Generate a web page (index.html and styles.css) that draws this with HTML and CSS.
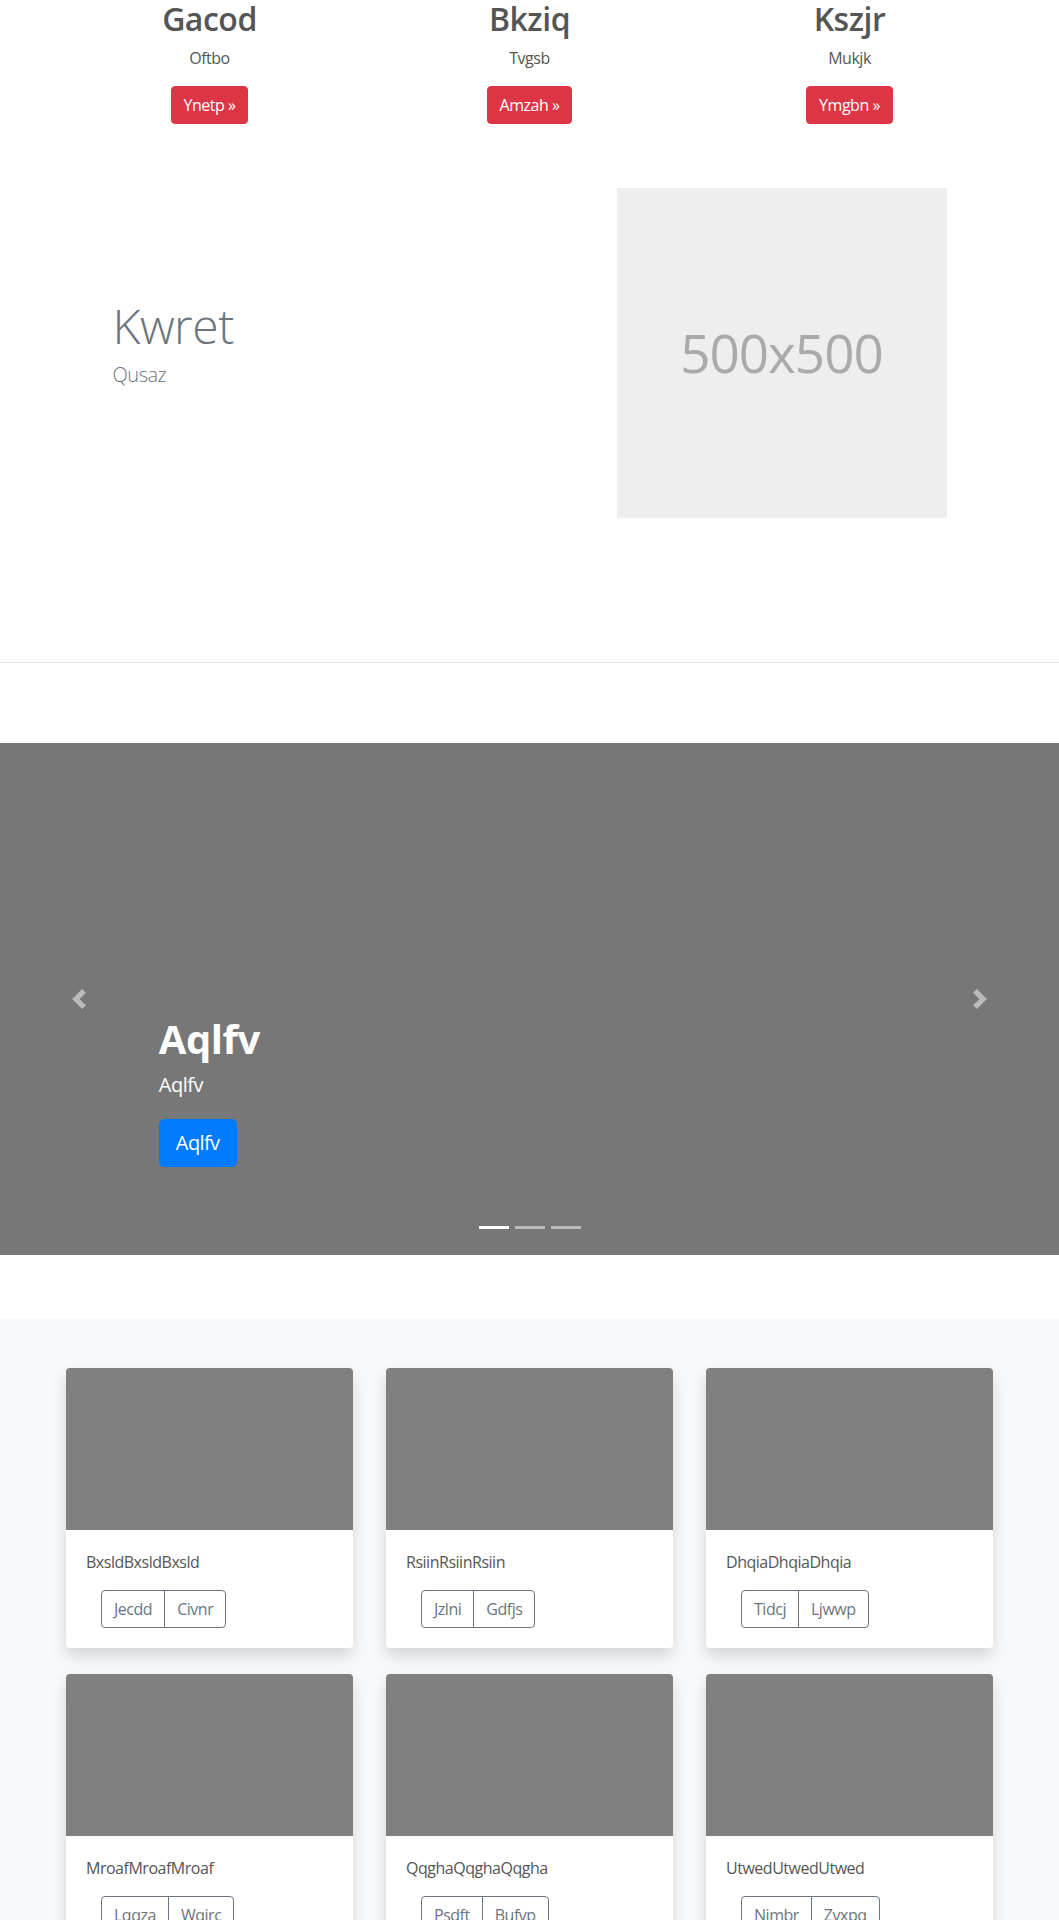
FILE: index.html
```html
<!DOCTYPE html>
<html lang="en">
<head>
<meta charset="utf-8">
<title>Page</title>
<link rel="stylesheet" href="styles.css">
</head>
<body>
<section class="features">
  <div class="features-grid">
    <div class="feature">
      <h2 class="feature-title">Gacod</h2>
      <p class="feature-text">Oftbo</p>
      <a class="btn btn-danger" href="#">Ynetp &raquo;</a>
    </div>
    <div class="feature">
      <h2 class="feature-title">Bkziq</h2>
      <p class="feature-text">Tvgsb</p>
      <a class="btn btn-danger" href="#">Amzah &raquo;</a>
    </div>
    <div class="feature">
      <h2 class="feature-title">Kszjr</h2>
      <p class="feature-text">Mukjk</p>
      <a class="btn btn-danger" href="#">Ymgbn &raquo;</a>
    </div>
  </div>
</section>

<section class="hero">
  <div class="hero-grid">
    <div class="hero-text">
      <h1 class="hero-title">Kwret</h1>
      <p class="hero-lead">Qusaz</p>
    </div>
    <div class="hero-media">
      <div class="placeholder">500x500</div>
    </div>
  </div>
</section>

<hr class="divider">

<section class="carousel">
  <div class="carousel-caption">
    <h1 class="caption-title">Aqlfv</h1>
    <p class="caption-text">Aqlfv</p>
    <a class="btn btn-primary btn-lg" href="#">Aqlfv</a>
  </div>
  <a class="carousel-control control-prev" href="#" aria-label="Previous">
    <svg class="control-icon" viewBox="0 0 8 8" width="20" height="20"><path d="M5.25 0l-4 4 4 4 1.5-1.5L4.25 4l2.5-2.5L5.25 0z"/></svg>
  </a>
  <a class="carousel-control control-next" href="#" aria-label="Next">
    <svg class="control-icon" viewBox="0 0 8 8" width="20" height="20"><path d="M2.75 0l-1.5 1.5L3.75 4l-2.5 2.5L2.75 8l4-4-4-4z"/></svg>
  </a>
  <ol class="carousel-indicators">
    <li class="indicator active"></li>
    <li class="indicator"></li>
    <li class="indicator"></li>
  </ol>
</section>

<section class="album">
  <div class="album-grid">
    <div class="card">
      <div class="card-img"></div>
      <div class="card-body">
        <p class="card-text">BxsldBxsldBxsld</p>
        <div class="btn-group">
          <button class="btn btn-outline">Jecdd</button>
          <button class="btn btn-outline">Civnr</button>
        </div>
      </div>
    </div>
    <div class="card">
      <div class="card-img"></div>
      <div class="card-body">
        <p class="card-text">RsiinRsiinRsiin</p>
        <div class="btn-group">
          <button class="btn btn-outline">Jzlni</button>
          <button class="btn btn-outline">Gdfjs</button>
        </div>
      </div>
    </div>
    <div class="card">
      <div class="card-img"></div>
      <div class="card-body">
        <p class="card-text">DhqiaDhqiaDhqia</p>
        <div class="btn-group">
          <button class="btn btn-outline">Tidcj</button>
          <button class="btn btn-outline">Ljwwp</button>
        </div>
      </div>
    </div>
    <div class="card">
      <div class="card-img"></div>
      <div class="card-body">
        <p class="card-text">MroafMroafMroaf</p>
        <div class="btn-group">
          <button class="btn btn-outline">Lqqza</button>
          <button class="btn btn-outline">Wqirc</button>
        </div>
      </div>
    </div>
    <div class="card">
      <div class="card-img"></div>
      <div class="card-body">
        <p class="card-text">QqghaQqghaQqgha</p>
        <div class="btn-group">
          <button class="btn btn-outline">Psdft</button>
          <button class="btn btn-outline">Bufvp</button>
        </div>
      </div>
    </div>
    <div class="card">
      <div class="card-img"></div>
      <div class="card-body">
        <p class="card-text">UtwedUtwedUtwed</p>
        <div class="btn-group">
          <button class="btn btn-outline">Nimbr</button>
          <button class="btn btn-outline">Zvxpq</button>
        </div>
      </div>
    </div>
  </div>
</section>
</body>
</html>
```

FILE: styles.css
```css
* { box-sizing: border-box; }

body {
  margin: 0;
  font-family: "Open Sans", "Noto Sans", "DejaVu Sans", sans-serif;
  font-size: 16px;
  line-height: 1.5;
  letter-spacing: -0.03em;
  color: #212529;
  background: #fff;
}

/* Buttons */
.btn {
  display: inline-block;
  font-family: inherit;
  font-size: 16px;
  line-height: 24px;
  letter-spacing: -0.03em;
  padding: 6px 12px;
  border: 1px solid transparent;
  border-radius: 4px;
  text-decoration: none;
  background: transparent;
  cursor: pointer;
}
.btn-danger {
  background: #dc3545;
  border-color: #dc3545;
  color: #fff;
}
.btn-primary {
  background: #007bff;
  border-color: #007bff;
  color: #fff;
}
.btn-lg {
  font-size: 20px;
  line-height: 30px;
  padding: 8px 16px;
  border-radius: 5px;
}
.btn-outline {
  color: #6c757d;
  border-color: #6c757d;
}

/* Features */
.features-grid {
  width: 960px;
  margin: 0 auto;
  display: grid;
  grid-template-columns: repeat(3, 1fr);
}
.feature {
  text-align: center;
}
.feature-title {
  margin: 0 0 8px;
  font-size: 32px;
  line-height: 38px;
  font-weight: 600;
  color: #555;
}
.feature-text {
  margin: 0 0 16px;
  color: #555;
}

/* Hero */
.hero {
  padding: 64px 0 144px;
}
.hero-grid {
  width: 960px;
  margin: 0 auto;
  display: grid;
  grid-template-columns: 1fr 1fr;
  align-items: center;
}
.hero-text {
  padding: 0 63px;
}
.hero-title {
  margin: 0 0 6px;
  font-size: 48px;
  line-height: 57.6px;
  font-weight: 300;
  color: #6c757d;
}
.hero-lead {
  margin: 0 0 19px;
  font-size: 20px;
  line-height: 30px;
  font-weight: 300;
  color: #6c757d;
}
.hero-media {
  padding: 0 63px;
  display: flex;
  justify-content: flex-end;
}
.placeholder {
  width: 330px;
  height: 330px;
  background: #eeeeee;
  color: #aaaaaa;
  display: flex;
  align-items: center;
  justify-content: center;
  font-size: 53px;
  font-weight: 400;
  letter-spacing: -1px;
}

.divider {
  margin: 0;
  border: 0;
  border-top: 1px solid #e5e5e5;
}

/* Carousel */
.carousel {
  position: relative;
  margin-top: 80px;
  height: 512px;
  background: #777777;
}
.carousel-caption {
  position: absolute;
  left: 15%;
  right: 15%;
  top: 272px;
  color: #fff;
  text-align: left;
}
.caption-title {
  margin: 0 0 7px;
  font-size: 40px;
  line-height: 48px;
  font-weight: 700;
}
.caption-text {
  margin: 0 0 19px;
  font-size: 20px;
  line-height: 30px;
  font-weight: 500;
}
.carousel-control {
  position: absolute;
  top: 0;
  bottom: 0;
  width: 15%;
  display: flex;
  align-items: center;
  justify-content: center;
  opacity: 0.5;
}
.control-prev { left: 0; }
.control-next { right: 0; }
.control-icon {
  display: block;
  fill: #fff;
}
.carousel-indicators {
  position: absolute;
  left: 0;
  right: 0;
  bottom: 26px;
  margin: 0;
  padding: 0;
  list-style: none;
  display: flex;
  justify-content: center;
  gap: 6px;
}
.indicator {
  width: 30px;
  height: 3px;
  background: rgba(255, 255, 255, 0.5);
}
.indicator.active {
  background: #fff;
}

/* Album */
.album {
  margin-top: 64px;
  background: #f8f9fa;
  padding: 49px 0 48px;
}
.album-grid {
  width: 927px;
  margin: 0 auto;
  display: grid;
  grid-template-columns: repeat(3, 1fr);
  column-gap: 33px;
  row-gap: 26px;
}
.card {
  background: #fff;
  border-radius: 4px;
  overflow: hidden;
  box-shadow: 0 8px 16px rgba(0, 0, 0, 0.15);
}
.card-img {
  height: 162px;
  background: #808080;
}
.card-body {
  padding: 20px;
}
.card-text {
  margin: 0 0 16px;
  color: #555;
}
.btn-group {
  display: inline-flex;
  margin-left: 15px;
}
.btn-group .btn:first-child {
  border-top-right-radius: 0;
  border-bottom-right-radius: 0;
}
.btn-group .btn + .btn {
  margin-left: -1px;
  border-top-left-radius: 0;
  border-bottom-left-radius: 0;
}
```
